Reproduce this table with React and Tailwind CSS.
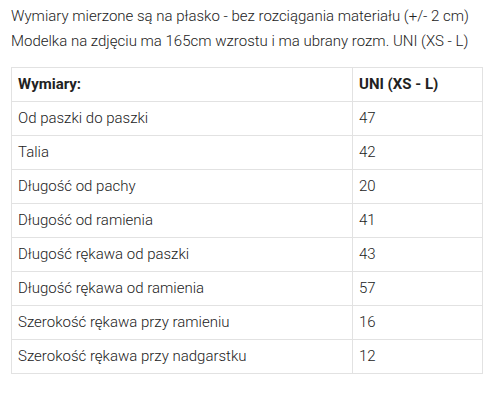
export default function App() {
  const rows = [
    ["Od paszki do paszki", "47"],
    ["Talia", "42"],
    ["Długość od pachy", "20"],
    ["Długość od ramienia", "41"],
    ["Długość rękawa od paszki", "43"],
    ["Długość rękawa od ramienia", "57"],
    ["Szerokość rękawa przy ramieniu", "16"],
    ["Szerokość rękawa przy nadgarstku", "12"],
  ];
  return (
    <div className="w-[499px] h-[400px] bg-white text-[#222] font-['Roboto',sans-serif] font-light text-[15px] pl-[11px] pt-[4px]">
      <p className="leading-[25px]">Wymiary mierzone są na płasko - bez rozciągania materiału (+/- 2 cm)</p>
      <p className="leading-[25px]">Modelka na zdjęciu ma 165cm wzrostu i ma ubrany rozm. UNI (XS - L)</p>
      <table className="mt-[13px] w-[471px] border-collapse table-fixed">
        <colgroup>
          <col className="w-[341px]" />
          <col className="w-[130px]" />
        </colgroup>
        <tbody>
          <tr className="h-[34px]">
            <td className="border border-[#e2e2e2] px-[6px] font-bold">Wymiary:</td>
            <td className="border border-[#e2e2e2] px-[6px] font-bold">UNI (XS - L)</td>
          </tr>
          {rows.map(([a, b]) => (
            <tr key={a} className="h-[34px]">
              <td className="border border-[#e2e2e2] px-[6px]">{a}</td>
              <td className="border border-[#e2e2e2] px-[6px]">{b}</td>
            </tr>
          ))}
        </tbody>
      </table>
    </div>
  );
}
